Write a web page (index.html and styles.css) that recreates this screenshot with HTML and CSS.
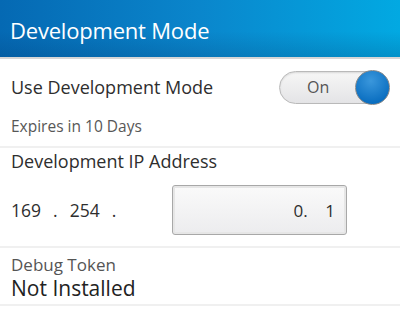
FILE: index.html
```html
<!DOCTYPE html>
<html lang="en">
<head>
  <meta charset="UTF-8">
  <title>Development Mode</title>
  <link rel="stylesheet" href="styles.css">
</head>
<body>
  <header class="title-bar">
    <h1>Development Mode</h1>
  </header>

  <!-- Toggle -->
  <section class="group">
    <div class="toggle-row">
      <span class="label">Use Development Mode</span>
      <div class="toggle">
        <span class="toggle-text">On</span>
        <span class="knob"></span>
      </div>
    </div>
    <p class="note">Expires in 10 Days</p>
  </section>

  <!-- IP -->
  <section class="group ip">
    <p class="label">Development IP Address</p>
    <div class="ip-row">
      <div class="ip-fixed">
        <span>169</span><span>.</span><span>254</span><span>.</span>
      </div>
      <div class="ip-box">0.&nbsp;&nbsp;&nbsp;&nbsp;1</div>
    </div>
  </section>

  <!-- Token -->
  <section class="group token">
    <p class="small">Debug Token</p>
    <p class="value">Not Installed</p>
  </section>
</body>
</html>
```

FILE: styles.css
```css
/* ======= Global ======= */
body {
  margin: 0;
  font-family: "Open Sans", "Liberation Sans", sans-serif;
  background: #fff;
  color: #2b2b2b;
  width: 400px;
  height: 321px;
  overflow: hidden;
}

p {
  margin: 0;
}

/* Title bar */
.title-bar {
  height: 57px;
  background: linear-gradient(180deg, rgba(0, 0, 0, 0) 55%, rgba(0, 40, 90, 0.18) 100%),
              linear-gradient(90deg, #0569b3 0%, #0a86cc 50%, #02a9e2 100%);
  border-bottom: 2px solid #d6d6d6;
  display: flex;
  align-items: center;
  padding: 0 10px;
}

.title-bar h1 {
  margin: 0;
  padding-top: 3px;
  font-size: 22px;
  font-weight: normal;
  color: #fff;
  letter-spacing: -0.2px;
}

/* Groups */
.group {
  border-bottom: 2px solid #f0f0f0;
  padding: 0 11px;
}

.label {
  font-size: 18px;
  line-height: 22px;
  color: #2e2e2e;
}

.toggle-row {
  display: flex;
  justify-content: space-between;
  align-items: center;
  height: 56px;
}

.toggle {
  width: 108px;
  height: 31px;
  border-radius: 17px;
  border: 1px solid #b9b9b9;
  background: linear-gradient(180deg, #f6f6f6, #e4e4e6);
  display: flex;
  align-items: center;
  justify-content: space-between;
  box-shadow: inset 0 1px 2px rgba(0, 0, 0, 0.12);
}

.toggle-text {
  font-size: 16px;
  color: #555;
  margin-left: 27px;
}

.knob {
  width: 33px;
  height: 33px;
  border-radius: 50%;
  background: radial-gradient(circle at 45% 30%, #3a97dc, #0a6ec0 75%);
  border: 1px solid #8a8a8a;
  margin-right: -2px;
}

.note {
  font-size: 15.5px;
  line-height: 20px;
  color: #575757;
  padding: 1px 0 10px;
}

/* IP */
.ip .label {
  padding-top: 2px;
}

.ip-row {
  display: flex;
  align-items: center;
  padding: 13px 0 11px;
}

.ip-fixed {
  display: flex;
  gap: 12px;
  font-size: 17.5px;
  color: #2e2e2e;
  width: 161px;
}

.ip-box {
  box-sizing: border-box;
  width: 175px;
  height: 50px;
  border: 1px solid #a8a8a8;
  border-radius: 3px;
  box-shadow: inset 0 0 0 2px #e6e6e6;
  background: linear-gradient(180deg, #fafafa, #ececee);
  display: flex;
  align-items: center;
  justify-content: flex-end;
  padding-right: 11px;
  font-size: 17px;
  color: #2e2e2e;
}

/* Token */
.token {
  padding-top: 7px;
  padding-bottom: 3px;
}

.small {
  font-size: 17px;
  color: #555;
  line-height: 20px;
}

.value {
  font-size: 21px;
  color: #222;
  line-height: 26px;
}
```
